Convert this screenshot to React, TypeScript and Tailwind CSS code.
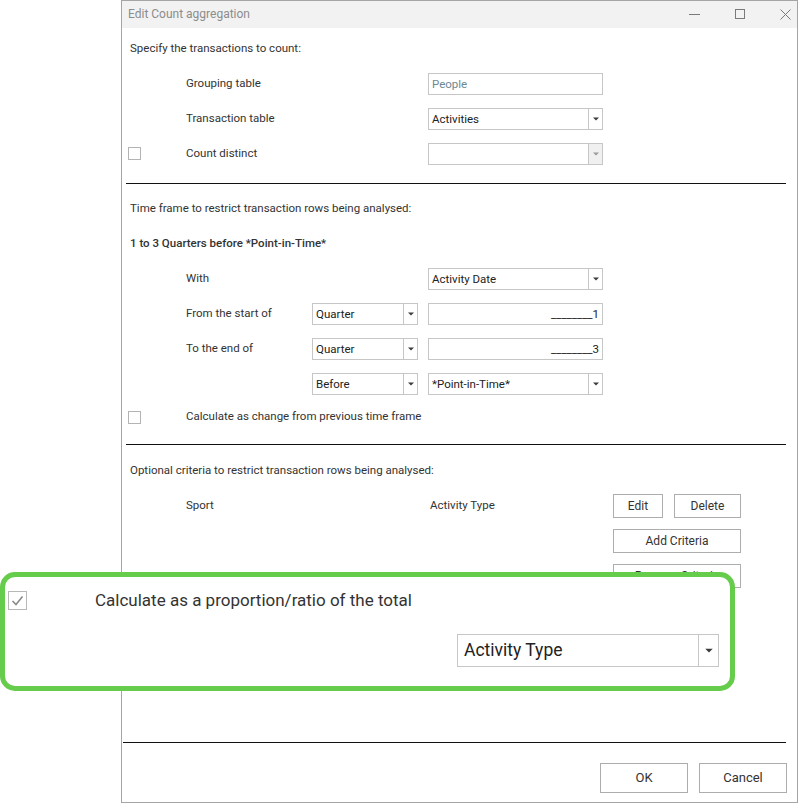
import type { ReactNode } from "react";

const font = "font-['Roboto',sans-serif]";

function Arrow({ muted = false, big = false }: { muted?: boolean; big?: boolean }) {
  return (
    <svg width={big ? 8 : 6} height={big ? 5 : 4} viewBox="0 0 6 4" aria-hidden="true">
      <path d="M0 0.5h6L3 3.5z" fill={muted ? "#9a9a9a" : "#3c3c3c"} />
    </svg>
  );
}

function Combo({ value = "", width = "w-[175px]", disabled = false }: { value?: string; width?: string; disabled?: boolean }) {
  return (
    <div className={`flex h-[22px] ${width} border border-[#c6c6c6] bg-white`}>
      <span className="flex-1 truncate px-[3px] leading-[20px] text-[#222]">{value}</span>
      <span className={`flex w-[14px] items-center justify-center border-l border-[#c6c6c6] ${disabled ? "bg-[#f0f0f0]" : ""}`}>
        <Arrow muted={disabled} />
      </span>
    </div>
  );
}

function TextBox({ value, align = "left", muted = false }: { value: string; align?: "left" | "right"; muted?: boolean }) {
  return (
    <div
      className={`h-[22px] w-[175px] border border-[#c6c6c6] bg-white px-[3px] leading-[20px] ${align === "right" ? "text-right" : ""} ${muted ? "text-[#6e8893]" : "text-[#222]"}`}
    >
      {value}
    </div>
  );
}

function Check() {
  return <span className="block h-[13px] w-[13px] border border-[#b4b4b4] bg-white" />;
}

function Btn({ children, width }: { children: ReactNode; width: string }) {
  return (
    <button className={`flex h-[24px] ${width} items-center justify-center border border-[#adadad] bg-white text-[12px] text-[#333]`}>
      {children}
    </button>
  );
}

// one form line: checkbox gutter, label, narrow combo, main control, side buttons
function Row({ check, label, narrow, main, side }: { check?: boolean; label?: string; narrow?: ReactNode; main?: ReactNode; side?: ReactNode }) {
  return (
    <div className="flex h-[35px] items-center">
      <div className="w-[64px] pl-[6px]">{check ? <Check /> : null}</div>
      <div className="w-[126px] text-[#333]">{label}</div>
      <div className="mr-[10px] w-[106px]">{narrow}</div>
      <div className="w-[175px]">{main}</div>
      <div className="ml-[10px] flex gap-[11px]">{side}</div>
    </div>
  );
}

function Heading({ children, bold = false }: { children: ReactNode; bold?: boolean }) {
  return <div className={`flex h-[35px] items-center pl-[8px] text-[#333] ${bold ? "font-medium" : ""}`}>{children}</div>;
}

function TitleBar() {
  return (
    <div className="flex h-[27px] shrink-0 items-center bg-[#f2f2f2] pb-px pl-[6px] text-[12px] text-[#8c8c8c]">
      <span>Edit Count aggregation</span>
      <div className="ml-auto flex items-center gap-[35px] pr-[6px]">
        <span className="block h-px w-[11px] bg-[#7a7a7a]" />
        <span className="block h-[10px] w-[10px] border border-[#7a7a7a]" />
        <svg width="11" height="11" viewBox="0 0 11 11" aria-hidden="true">
          <path d="M0.5 0.5l10 10M10.5 0.5l-10 10" stroke="#7a7a7a" strokeWidth="1" />
        </svg>
      </div>
    </div>
  );
}

export default function App() {
  return (
    <div className={`relative h-[803px] w-[798px] overflow-hidden bg-white text-[11.5px] ${font}`}>
      <div className="ml-[121px] flex h-[803px] w-[677px] flex-col border border-[#a5a5a5] bg-white">
        <TitleBar />

        <div className="pt-[3px]">
          <Heading>Specify the transactions to count:</Heading>
          <Row label="Grouping table" main={<TextBox value="People" muted />} />
          <Row label="Transaction table" main={<Combo value="Activities" />} />
          <Row check label="Count distinct" main={<Combo disabled />} />
        </div>
        <div className="ml-[4px] mr-[11px] mt-[12px] h-px bg-[#111]" />

        <div className="pt-[7px]">
          <Heading>Time frame to restrict transaction rows being analysed:</Heading>
          <Heading bold>1 to 3 Quarters before *Point-in-Time*</Heading>
          <Row label="With" main={<Combo value="Activity Date" />} />
          <Row label="From the start of" narrow={<Combo value="Quarter" width="w-[106px]" />} main={<TextBox value="________1" align="right" />} />
          <Row label="To the end of" narrow={<Combo value="Quarter" width="w-[106px]" />} main={<TextBox value="________3" align="right" />} />
          <Row narrow={<Combo value="Before" width="w-[106px]" />} main={<Combo value="*Point-in-Time*" />} />
          <div className="flex h-[32px] items-center">
            <div className="w-[64px] pl-[6px]">
              <Check />
            </div>
            <span className="text-[#333]">Calculate as change from previous time frame</span>
          </div>
        </div>
        <div className="ml-[4px] mr-[11px] mt-[11px] h-px bg-[#111]" />

        <div className="pt-[8px]">
          <Heading>Optional criteria to restrict transaction rows being analysed:</Heading>
          <Row
            label="Sport"
            main={<span className="pl-[2px] text-[#333]">Activity Type</span>}
            side={
              <>
                <Btn width="w-[50px]">Edit</Btn>
                <Btn width="w-[67px]">Delete</Btn>
              </>
            }
          />
          <Row side={<Btn width="w-[128px]">Add Criteria</Btn>} />
          <Row side={<Btn width="w-[128px]">Remove Criteria</Btn>} />
        </div>

        <div className="flex-1" />
        <div className="ml-px mr-[11px] h-px bg-[#111]" />
        <div className="flex h-[59px] items-start justify-end gap-[11px] pr-[10px] pt-[20px]">
          <button className="h-[30px] w-[88px] border border-[#adadad] bg-white text-[13px] text-[#333]">OK</button>
          <button className="h-[30px] w-[88px] border border-[#adadad] bg-white text-[13px] text-[#333]">Cancel</button>
        </div>
      </div>

      {/* enlarged callout of the ratio option */}
      <div className="absolute left-0 top-[572px] h-[119px] w-[735px] rounded-[15px] border-[5px] border-[#66cc4c] bg-white">
        <div className="flex items-center pl-[3px] pt-[11px]">
          <span className="flex h-[19px] w-[19px] items-center justify-center border border-[#b8b8b8] bg-white">
            <svg width="13" height="11" viewBox="0 0 13 11" aria-hidden="true">
              <path d="M1.5 6l3.5 3.5L11.5 1.5" fill="none" stroke="#8a8a8a" strokeWidth="1.6" />
            </svg>
          </span>
          <span className="ml-[68px] text-[17px] text-[#333]">Calculate as a proportion/ratio of the total</span>
        </div>
        <div className="mt-[20px] flex justify-end pr-[11px]">
          <div className="flex h-[33px] w-[262px] border border-[#c6c6c6] bg-white">
            <span className="flex-1 pl-[6px] text-[17.5px] leading-[31px] text-[#222]">Activity Type</span>
            <span className="flex w-[20px] items-center justify-center border-l border-[#c6c6c6]">
              <Arrow big />
            </span>
          </div>
        </div>
      </div>
    </div>
  );
}
